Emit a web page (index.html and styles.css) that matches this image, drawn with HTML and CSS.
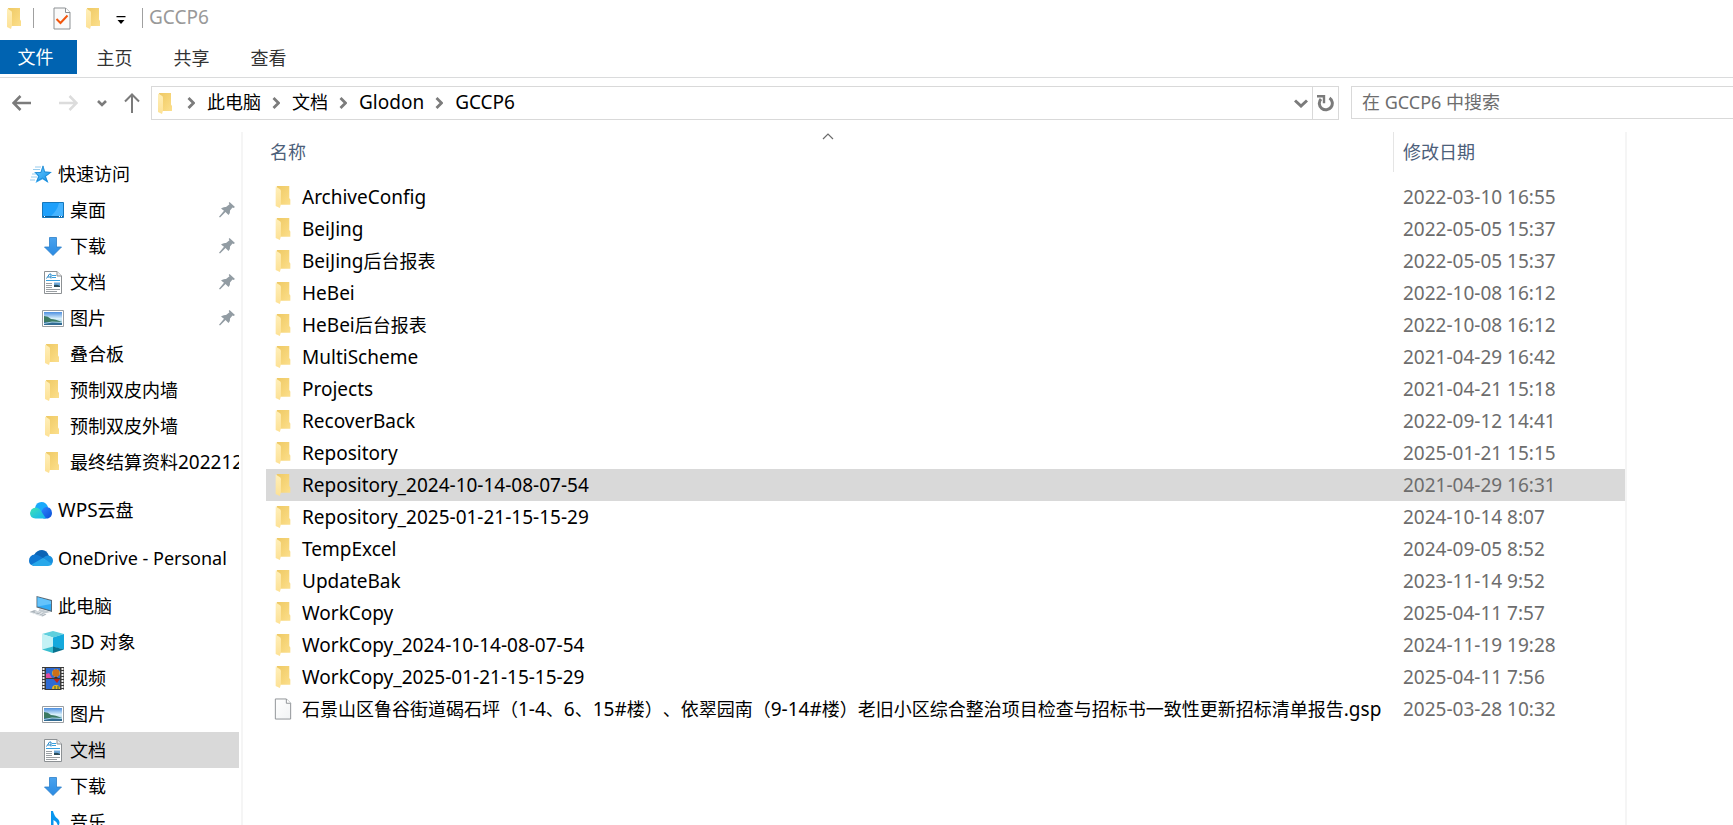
FILE: index.html
```
<!DOCTYPE html>
<html lang="zh-CN">
  <head>
    <meta charset="utf-8">
    <title>GCCP6</title>
    <link rel="stylesheet" href="styles.css">
  </head>
  <body>
    <!-- icon set -->
    <svg class="icon-defs" width="0" height="0" aria-hidden="true">
      <defs>
        <linearGradient id="folderBack" x1="0" y1="0" x2="1" y2="1">
          <stop offset="0" stop-color="#eec965"/>
          <stop offset="0.6" stop-color="#f7d67a"/>
          <stop offset="1" stop-color="#fbdf8e"/>
        </linearGradient>
        <linearGradient id="folderFlap" x1="0" y1="0" x2="0" y2="1">
          <stop offset="0" stop-color="#ffefb9"/>
          <stop offset="1" stop-color="#fde195"/>
        </linearGradient>
        <linearGradient id="blueArrow" x1="0" y1="0" x2="0" y2="1">
          <stop offset="0" stop-color="#4aa3ee"/>
          <stop offset="1" stop-color="#2a8ae2"/>
        </linearGradient>
        <linearGradient id="sky" x1="0" y1="0" x2="0" y2="1">
          <stop offset="0" stop-color="#4d8fe0"/>
          <stop offset="0.5" stop-color="#d8effa"/>
          <stop offset="1" stop-color="#8fc3e0"/>
        </linearGradient>
        <linearGradient id="star" x1="0" y1="0" x2="1" y2="1">
          <stop offset="0" stop-color="#6ccbff"/>
          <stop offset="1" stop-color="#1190e8"/>
        </linearGradient>
        <linearGradient id="wpsLeft" x1="0" y1="0" x2="1" y2="1">
          <stop offset="0" stop-color="#3fe3b4"/>
          <stop offset="1" stop-color="#12b3f4"/>
        </linearGradient>
        <linearGradient id="wpsRight" x1="0" y1="0" x2="1" y2="1">
          <stop offset="0" stop-color="#2d86ff"/>
          <stop offset="1" stop-color="#0a4fd6"/>
        </linearGradient>
        <linearGradient id="paper" x1="0" y1="0" x2="1" y2="1">
          <stop offset="0" stop-color="#ffffff"/>
          <stop offset="1" stop-color="#f1f3f4"/>
        </linearGradient>
      </defs>
      <symbol id="folder" viewBox="0 0 14 21">
        <path d="M1 0H13V11.500L14 13V18H4Z" fill="url(#folderBack)"/>
        <path d="M0 0.500L4.200 3Q5 3.500 5 5V17.500L4 21L0 19Z" fill="url(#folderFlap)"/>
      </symbol>
      <symbol id="file" viewBox="0 0 18 23">
        <path d="M1 1H12.500L17 5.500V22H1Z" fill="url(#paper)" stroke="#8d9194"/>
        <path d="M12.500 1V5.500H17" fill="#fff" stroke="#8d9194"/>
      </symbol>
      <symbol id="checkFile" viewBox="0 0 18 23">
        <path d="M1 1H12.500L17 5.500V22H1Z" fill="#fafafa" stroke="#8d9194"/>
        <path d="M12.500 1V5.500H17" fill="#fff" stroke="#8d9194"/>
        <path d="M3.500 12L7.500 16L14.500 8.500" fill="none" stroke="#f2560d" stroke-width="2"/>
      </symbol>
      <symbol id="quickStar" viewBox="0 0 22 18">
        <path d="M13 0L15 6.500L22 7L16 11.500L18.500 18L12.500 14.200L5.500 18L8 11.500L4 7H10.500Z" fill="url(#star)"/>
        <path d="M13 1L14.600 7L20.500 7.500L15.200 11.300L17.200 16.300L12.500 13L7 16L9 11L5.500 7.500H11Z" fill="none" stroke="#1b83cc" stroke-width="0.700"/>
        <path d="M5 2H11M3 4.500H10M2 9H6M1 12H7M0 15H5" stroke="#7fbfe9" stroke-width="0.800"/>
      </symbol>
      <symbol id="desktop" viewBox="0 0 22 16">
        <path d="M0.500 0.500H21.500V15.500H0.500Z" fill="#1ea0fb" stroke="#1578bd"/>
        <path d="M21 1V14H9Q15 9 17 1Z" fill="#45b3ff"/>
        <path d="M1 14.500H21" stroke="#0b5c9b"/>
        <path d="M2 14.500H3M17 14.500H18M19 14.500H20" stroke="#fff"/>
      </symbol>
      <symbol id="download" viewBox="0 0 18 19">
        <path d="M5.500 0.500H12.500V10H17.500L9 18.500L0.500 10H5.500Z" fill="url(#blueArrow)" stroke="#2c7fc9" stroke-width="0.800"/>
      </symbol>
      <symbol id="document" viewBox="0 0 18 23">
        <path d="M0.500 0.500H13L17.500 5V22.500H0.500Z" fill="#fff" stroke="#8d9194"/>
        <path d="M13 0.500V5H17.500" fill="#eee" stroke="#8d9194"/>
        <path d="M2.500 7.500L5.500 3H7V7.500M4 6H7" fill="none" stroke="#2384c6"/>
        <path d="M8 4.500H12M8 6.500H12M2 9.500H16" stroke="#39a0de"/>
        <path d="M2 12.500H8M2 14.500H8M2 16.500H8M2 18.500H16M2 20.500H13" stroke="#9a9fa3"/>
        <path d="M10 11.500H16V16H10Z" fill="#6fa8d8"/>
        <path d="M10 14Q13 13 16 15V16H10Z" fill="#2b4d5b"/>
      </symbol>
      <symbol id="picture" viewBox="0 0 22 17">
        <path d="M0.500 0.500H21.500V16.500H0.500Z" fill="#fff" stroke="#999ea2"/>
        <path d="M2 2H20V15H2Z" fill="url(#sky)"/>
        <path d="M2 6Q6 6 9 9Q13 9 20 12H2Z" fill="#3c7a62"/>
        <path d="M2 12H20V15H2Z" fill="#316b93"/>
        <path d="M2 13.500Q9 11 20 12.500" fill="none" stroke="#a8d3e6"/>
      </symbol>
      <symbol id="wps" viewBox="0 0 22 17">
        <path d="M5 6Q6 0 11.500 0Q16 0 18 5L15 13H7Z" fill="#19a9fb"/>
        <path d="M13.500 16.500Q10 14 11.500 9.500Q13 5 17 5Q22 6 22 11Q22 15 18 16.500Z" fill="url(#wpsRight)"/>
        <path d="M5.500 16.500Q0 16 0 11Q1 5.500 6 5.500Q9 5.500 11 9L16 16.500Z" fill="url(#wpsLeft)"/>
      </symbol>
      <symbol id="onedrive" viewBox="0 0 24 16">
        <path d="M5 5Q8 0 13 0Q18 0 20 6L14 9Z" fill="#0a63b5"/>
        <path d="M0 11Q0 5 6 4.500Q9 4.500 14 8L5 16Q0 15 0 11Z" fill="#0f77d1"/>
        <path d="M19 5.500Q24 6 24 11Q24 13 22 15L14 8Q16 5.500 19 5.500Z" fill="#1890df"/>
        <path d="M2.500 14.500L14 8L23 14Q22 16 19 16H6Q4 16 2.500 14.500Z" fill="#28a8ea"/>
      </symbol>
      <symbol id="computer" viewBox="0 0 23 21">
        <path d="M7 0L22.500 4V16L7 11.500Z" fill="#5a6b77"/>
        <path d="M8 1.300L21.500 5V14.500L8 10.500Z" fill="#31aaf5"/>
        <path d="M8 1.300L21.500 5V8L8 10.500Z" fill="#64c3fb"/>
        <path d="M10 13L18 15L21 16L15 17.500L9 15Z" fill="#c3cbd1"/>
        <path d="M0 16L5 14L17 18.500L13 20.500Z" fill="#aab3ba"/>
        <path d="M2 16.500L13 20M5 15L15 19M4 18L9 15M8 19.500L13 16.500" stroke="#e9eef1" stroke-width="0.700"/>
      </symbol>
      <symbol id="cube" viewBox="0 0 22 22">
        <path d="M0 3L11 0L22 3L11 6.500Z" fill="#5fcfdd"/>
        <path d="M0 3L11 6.500V16L0 18.500Z" fill="#c3f2f5"/>
        <path d="M22 3L11 6.500V16L22 18.500Z" fill="#14a9dc"/>
        <path d="M0 18.500L11 15.500V22Z" fill="#38bfd0"/>
        <path d="M22 18.500L11 15.500V22Z" fill="#08728f"/>
      </symbol>
      <symbol id="video" viewBox="0 0 22 23">
        <path d="M0 0H22V23H0Z" fill="#3a3a3a"/>
        <path d="M1.500 1V23M20.500 1V23" stroke="#f1f1f1" stroke-width="2" stroke-dasharray="2 1"/>
        <path d="M4 1H18V11H4ZM4 12H18V22H4Z" fill="#2e6bd3"/>
        <path d="M4 7L7 6L10 11H4Z" fill="#e14ba0"/>
        <circle cx="14" cy="6" r="3.800" fill="#f0b51c"/>
        <path d="M14 2.200V10M12 3V9M16 3V9" stroke="#a82a17"/>
        <path d="M12.500 10H15.500V11H12.500Z" fill="#4c2b18"/>
        <path d="M11.500 12H18L15 16Z" fill="#bd2519"/>
        <path d="M10 22Q10 18 14 18Q18 18 18 22Z" fill="#f0b51c"/>
        <path d="M13 22V19M16 22V19" stroke="#2b6b36"/>
      </symbol>
      <symbol id="music" viewBox="0 0 18 22">
        <path d="M7 0H9Q10 5 14 8Q17 11 14 16Q14 11 9.500 9V17Q9 21 4 21Q0 20 1 17Q3 14 7 15Z" fill="#0a96ee"/>
      </symbol>
      <symbol id="pin" viewBox="0 0 16 16">
        <path d="M10.500 0L16 5L14.500 6L13.500 5.500L11 8.500Q11.500 11 9.500 13L6.500 10L1 15.500L0 14.800L5 8.800L2 6.500Q4.500 4.500 7 5L10.500 2.300L9.700 1Z" fill="#929ca3"/>
      </symbol>
      <symbol id="crumb" viewBox="0 0 8 12">
        <path d="M1.500 1L6.500 6L1.500 11" fill="none" stroke="#7c7c7c" stroke-width="2.800"/>
      </symbol>
    </svg>

    <header class="title-bar">
      <svg class="folder-icon"><use href="#folder"/></svg>
      <span class="divider"></span>
      <button class="quick-button check-button" aria-label="属性"><svg class="file-icon"><use href="#checkFile"/></svg></button>
      <button class="quick-button" aria-label="新建文件夹"><svg class="folder-icon"><use href="#folder"/></svg></button>
      <button class="quick-button more-button" aria-label="自定义快速访问工具栏">
        <svg width="10" height="8" viewBox="0 0 10 8"><path d="M0.500 0H9.500V1.200H0.500ZM1.500 4H8.500L5 8Z"/></svg>
      </button>
      <span class="divider"></span>
      <span class="window-title">GCCP6</span>
    </header>

    <nav class="ribbon">
      <button class="tab tab-file">文件</button>
      <button class="tab">主页</button>
      <button class="tab">共享</button>
      <button class="tab">查看</button>
    </nav>

    <div class="address-row">
      <div class="history">
        <button class="nav-button" aria-label="后退">
          <svg width="20" height="16" viewBox="0 0 20 16"><path d="M19 8H2M8.500 1L1.500 8L8.500 15" fill="none" stroke="#7b7b7b" stroke-width="2.600"/></svg>
        </button>
        <button class="nav-button" aria-label="前进" disabled>
          <svg width="20" height="16" viewBox="0 0 20 16"><path d="M1 8H18M11.500 1L18.500 8L11.500 15" fill="none" stroke="#dcdcdc" stroke-width="2.600"/></svg>
        </button>
        <button class="nav-button recent-button" aria-label="最近浏览的位置">
          <svg width="10" height="7" viewBox="0 0 10 7"><path d="M1 1L5 5L9 1" fill="none" stroke="#7b7b7b" stroke-width="2.600"/></svg>
        </button>
        <button class="nav-button up-button" aria-label="上移">
          <svg width="16" height="20" viewBox="0 0 16 20"><path d="M8 20V2M1 8.500L8 1.500L15 8.500" fill="none" stroke="#7b7b7b" stroke-width="2"/></svg>
        </button>
      </div>
      <div class="address-bar">
        <svg class="folder-icon"><use href="#folder"/></svg>
        <svg class="crumb-icon"><use href="#crumb"/></svg>
        <a href="#">此电脑</a>
        <svg class="crumb-icon"><use href="#crumb"/></svg>
        <a href="#">文档</a>
        <svg class="crumb-icon"><use href="#crumb"/></svg>
        <a href="#" class="latin">Glodon</a>
        <svg class="crumb-icon"><use href="#crumb"/></svg>
        <a href="#" class="latin">GCCP6</a>
        <button class="previous-button" aria-label="以前的位置">
          <svg width="14" height="9" viewBox="0 0 14 9"><path d="M1 1.500L7 7L13 1.500" fill="none" stroke="#7b7b7b" stroke-width="3"/></svg>
        </button>
        <button class="refresh-button" aria-label="刷新">
          <svg width="17" height="17" viewBox="0 0 17 17"><path d="M4 4A6.500 6.500 0 1 0 12.500 3" fill="none" stroke="#7b7b7b" stroke-width="3"/><path d="M0 1.200H7V8.200" fill="none" stroke="#7b7b7b" stroke-width="2.400"/></svg>
        </button>
      </div>
      <input type="search" class="search-box" aria-label="搜索" placeholder="在 GCCP6 中搜索">
    </div>

    <div class="explorer">
      <nav class="side-nav">
        <div class="nav-group">
          <a href="#" class="nav-root"><svg width="22" height="18"><use href="#quickStar"/></svg>快速访问</a>
          <a href="#" class="nav-item"><svg width="22" height="16"><use href="#desktop"/></svg><span class="label">桌面</span><svg class="pin-icon"><use href="#pin"/></svg></a>
          <a href="#" class="nav-item"><svg width="22" height="19"><use href="#download"/></svg><span class="label">下载</span><svg class="pin-icon"><use href="#pin"/></svg></a>
          <a href="#" class="nav-item"><svg width="22" height="23"><use href="#document"/></svg><span class="label">文档</span><svg class="pin-icon"><use href="#pin"/></svg></a>
          <a href="#" class="nav-item"><svg width="22" height="17"><use href="#picture"/></svg><span class="label">图片</span><svg class="pin-icon"><use href="#pin"/></svg></a>
          <a href="#" class="nav-item"><svg width="20" height="21"><use href="#folder"/></svg><span class="label">叠合板</span></a>
          <a href="#" class="nav-item"><svg width="20" height="21"><use href="#folder"/></svg><span class="label">预制双皮内墙</span></a>
          <a href="#" class="nav-item"><svg width="20" height="21"><use href="#folder"/></svg><span class="label">预制双皮外墙</span></a>
          <a href="#" class="nav-item"><svg width="20" height="21"><use href="#folder"/></svg><span class="label">最终结算资料<span class="latin">202212</span></span></a>
        </div>
        <div class="nav-group">
          <a href="#" class="nav-root"><svg width="22" height="17"><use href="#wps"/></svg><span><span class="latin">WPS</span>云盘</span></a>
        </div>
        <div class="nav-group">
          <a href="#" class="nav-root"><svg width="24" height="16"><use href="#onedrive"/></svg><span>OneDrive - Personal</span></a>
        </div>
        <div class="nav-group">
          <a href="#" class="nav-root"><svg width="23" height="21"><use href="#computer"/></svg>此电脑</a>
          <a href="#" class="nav-item"><svg width="22" height="22"><use href="#cube"/></svg><span class="label"><span class="latin">3D</span> 对象</span></a>
          <a href="#" class="nav-item"><svg width="22" height="23"><use href="#video"/></svg><span class="label">视频</span></a>
          <a href="#" class="nav-item"><svg width="22" height="17"><use href="#picture"/></svg><span class="label">图片</span></a>
          <a href="#" class="nav-item selected"><svg width="22" height="23"><use href="#document"/></svg><span class="label">文档</span></a>
          <a href="#" class="nav-item"><svg width="22" height="19"><use href="#download"/></svg><span class="label">下载</span></a>
          <a href="#" class="nav-item"><svg width="22" height="22"><use href="#music"/></svg><span class="label">音乐</span></a>
        </div>
      </nav>

      <main class="file-pane">
        <table class="file-table">
          <thead>
            <tr>
              <th class="name-col">
                <button class="column-button">名称</button>
                <svg class="sort-icon" viewBox="0 0 12 7"><path d="M1 6L6 1L11 6" fill="none" stroke="#6b6b6b" stroke-width="1.200"/></svg>
              </th>
              <th class="date-col"><button class="column-button">修改日期</button></th>
            </tr>
          </thead>
          <tbody>
            <tr><td><div class="file"><svg><use href="#folder"/></svg><span class="latin">ArchiveConfig</span></div></td><td class="date">2022-03-10 16:55</td></tr>
            <tr><td><div class="file"><svg><use href="#folder"/></svg><span class="latin">BeiJing</span></div></td><td class="date">2022-05-05 15:37</td></tr>
            <tr><td><div class="file"><svg><use href="#folder"/></svg><span><span class="latin">BeiJing</span>后台报表</span></div></td><td class="date">2022-05-05 15:37</td></tr>
            <tr><td><div class="file"><svg><use href="#folder"/></svg><span class="latin">HeBei</span></div></td><td class="date">2022-10-08 16:12</td></tr>
            <tr><td><div class="file"><svg><use href="#folder"/></svg><span><span class="latin">HeBei</span>后台报表</span></div></td><td class="date">2022-10-08 16:12</td></tr>
            <tr><td><div class="file"><svg><use href="#folder"/></svg><span class="latin">MultiScheme</span></div></td><td class="date">2021-04-29 16:42</td></tr>
            <tr><td><div class="file"><svg><use href="#folder"/></svg><span class="latin">Projects</span></div></td><td class="date">2021-04-21 15:18</td></tr>
            <tr><td><div class="file"><svg><use href="#folder"/></svg><span class="latin">RecoverBack</span></div></td><td class="date">2022-09-12 14:41</td></tr>
            <tr><td><div class="file"><svg><use href="#folder"/></svg><span class="latin">Repository</span></div></td><td class="date">2025-01-21 15:15</td></tr>
            <tr class="selected"><td><div class="file"><svg><use href="#folder"/></svg><span class="latin">Repository_2024-10-14-08-07-54</span></div></td><td class="date">2021-04-29 16:31</td></tr>
            <tr><td><div class="file"><svg><use href="#folder"/></svg><span class="latin">Repository_2025-01-21-15-15-29</span></div></td><td class="date">2024-10-14 8:07</td></tr>
            <tr><td><div class="file"><svg><use href="#folder"/></svg><span class="latin">TempExcel</span></div></td><td class="date">2024-09-05 8:52</td></tr>
            <tr><td><div class="file"><svg><use href="#folder"/></svg><span class="latin">UpdateBak</span></div></td><td class="date">2023-11-14 9:52</td></tr>
            <tr><td><div class="file"><svg><use href="#folder"/></svg><span class="latin">WorkCopy</span></div></td><td class="date">2025-04-11 7:57</td></tr>
            <tr><td><div class="file"><svg><use href="#folder"/></svg><span class="latin">WorkCopy_2024-10-14-08-07-54</span></div></td><td class="date">2024-11-19 19:28</td></tr>
            <tr><td><div class="file"><svg><use href="#folder"/></svg><span class="latin">WorkCopy_2025-01-21-15-15-29</span></div></td><td class="date">2025-04-11 7:56</td></tr>
            <tr><td><div class="file"><svg><use href="#file"/></svg><span>石景山区鲁谷街道碣石坪（<span class="latin">1-4</span>、<span class="latin">6</span>、<span class="latin">15#</span>楼）、依翠园南（<span class="latin">9-14#</span>楼）老旧小区综合整治项目检查与招标书一致性更新招标清单报告<span class="latin">.gsp</span></span></div></td><td class="date">2025-03-28 10:32</td></tr>
          </tbody>
        </table>
      </main>
      <aside class="preview-pane"></aside>
    </div>
  </body>
</html>
```
FILE: styles.css
```
* {
  box-sizing: border-box;
}

body {
  margin: 0;
  height: 100vh;
  display: flex;
  flex-direction: column;
  overflow: hidden;
  background-color: #ffffff;
  color: #000000;
  font-family: "Noto Sans", "Noto Sans CJK SC", sans-serif;
  font-size: 18px;
  line-height: 24px;
  text-spacing-trim: space-all;
}

a {
  color: inherit;
  text-decoration: none;
}

button {
  padding: 0;
  border: none;
  background: none;
  color: inherit;
  font: inherit;
}

svg {
  display: block;
  flex: none;
}

.icon-defs {
  position: absolute;
}

.latin {
  font-size: 19px;
  line-height: 22px;
}

.folder-icon {
  width: 14px;
  height: 21px;
}

.file-icon {
  width: 18px;
  height: 23px;
}

/* Title bar */
.title-bar {
  display: flex;
  align-items: center;
  height: 40px;
  padding: 0 7px 4px;
}

.divider {
  width: 1px;
  height: 20px;
  margin: 0 6px 0 12px;
  background-color: #a0a0a0;
}

.check-button {
  margin: 0 15px 0 13px;
}

.more-button {
  margin: 4px 4px 0 16px;
}

.window-title {
  padding-bottom: 2px;
  color: #999999;
  font-size: 19px;
}

/* Ribbon tabs */
.ribbon {
  display: flex;
  height: 38px;
  border-bottom: 1px solid #dadbdc;
}

.tab {
  width: 77px;
  height: 34px;
  padding: 2px 2px 0 0;
  color: #333333;
}

.tab-file {
  padding: 0 6px 0 0;
  background-color: #0063b1;
  color: #ffffff;
}

/* Address row */
.address-row {
  display: flex;
  height: 54px;
  padding-top: 8px;
}

.history {
  display: flex;
  align-items: center;
  width: 151px;
  height: 34px;
  padding-left: 12px;
}

.nav-button {
  margin-right: 26px;
}

.recent-button {
  margin: 0 17px 0 -7px;
}

.up-button {
  margin: 0;
}

.address-bar {
  display: flex;
  flex: 1;
  align-items: center;
  height: 34px;
  padding-left: 6px;
  border: 1px solid #d9d9d9;
}

.address-bar a {
  padding-bottom: 2px;
}

.crumb-icon {
  width: 8px;
  height: 12px;
  margin: 0 12px 0 11px;
}

.address-bar .folder-icon {
  margin-right: 4px;
}

.previous-button {
  margin-left: auto;
  padding: 0 4px;
}

.refresh-button {
  display: flex;
  align-items: center;
  justify-content: center;
  width: 26px;
  height: 32px;
  border-left: 1px solid #d9d9d9;
}

.search-box {
  width: 382px;
  height: 33px;
  margin-left: 12px;
  padding: 0 10px 2px;
  border: 1px solid #d9d9d9;
  border-right: none;
  outline: none;
  font: inherit;
}

.search-box::placeholder {
  color: #6d6d6d;
}

/* Explorer body */
.explorer {
  display: flex;
  flex: 1;
  min-height: 0;
}

.side-nav {
  width: 243px;
  flex: none;
  padding: 24px 2px 0 0;
  overflow: hidden;
  border-right: 2px solid #f5f5f5;
}

.nav-group {
  margin-bottom: 12px;
}

.nav-root,
.nav-item {
  display: flex;
  align-items: center;
  height: 36px;
  white-space: nowrap;
}

.nav-root {
  padding-left: 29px;
}

.nav-root svg {
  width: 24px;
  margin-right: 5px;
}

.nav-item {
  padding-left: 42px;
}

.nav-item svg {
  margin-right: auto;
}

.label {
  flex: none;
  width: 169px;
  overflow: hidden;
}

.nav-item .label:has(+ .pin-icon) {
  width: 149px;
}

.nav-item .pin-icon {
  width: 16px;
  height: 16px;
  margin-right: 4px;
}

.selected {
  background-color: #d9d9d9;
}

/* File list */
.file-pane {
  flex: 1;
  padding-left: 23px;
}

.file-table {
  width: 100%;
  border-collapse: collapse;
  table-layout: fixed;
}

.file-table th {
  position: relative;
  height: 49px;
  padding: 0;
  vertical-align: top;
  font-weight: normal;
  text-align: left;
}

.column-button {
  display: block;
  width: 100%;
  height: 40px;
  padding-left: 4px;
  color: #4c607a;
  text-align: left;
}

.date-col {
  width: 232px;
}

.date-col .column-button {
  padding-left: 9px;
  border-left: 1px solid #e5e5e5;
}

/* sits over the header, above the sorted column */
.sort-icon {
  position: absolute;
  top: 1px;
  left: 50%;
  width: 12px;
  height: 7px;
  margin-left: -8px;
}

.file-table td {
  height: 32px;
  padding: 0;
  white-space: nowrap;
}

.file {
  display: flex;
  align-items: center;
}

.file svg {
  width: 18px;
  height: 22px;
  margin: 0 10px 0 8px;
}

.file-table .date {
  padding-left: 10px;
  color: #6d6d6d;
  font-size: 19px;
}

.preview-pane {
  width: 108px;
  border-left: 2px solid #f5f5f5;
}
```
